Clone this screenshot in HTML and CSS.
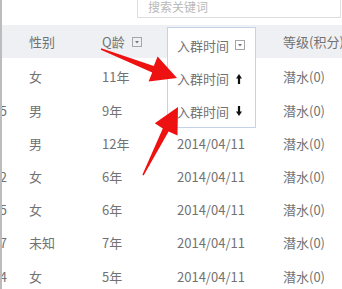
FILE: index.html
```html
<!DOCTYPE html>
<html lang="zh-CN">
<head>
  <meta charset="UTF-8">
  <title>群成员</title>
  <link rel="stylesheet" href="styles.css">
</head>
<body>
  <div class="page">
    <div class="toolbar">
      <div class="search">搜索关键词</div>
    </div>

    <div class="table">
      <div class="row head">
        <div class="cell num"></div>
        <div class="cell">性别</div>
        <div class="cell">Q龄
          <svg class="ico-box" viewBox="0 0 10 10" width="10" height="10"><rect x="0.5" y="0.5" width="9" height="9" fill="none" stroke="#a6a6a6"/><path d="M3 4h4l-2 2.5z" fill="#777"/></svg>
        </div>
        <div class="cell">入群时间</div>
        <div class="cell">等级(积分)</div>
      </div>

      <div class="row"><div class="cell num"></div><div class="cell">女</div><div class="cell">11年</div><div class="cell">2014/04/11</div><div class="cell">潜水(0)</div></div>
      <div class="row"><div class="cell num"><span>2835</span></div><div class="cell">男</div><div class="cell">9年</div><div class="cell">2014/04/11</div><div class="cell">潜水(0)</div></div>
      <div class="row"><div class="cell num"></div><div class="cell">男</div><div class="cell">12年</div><div class="cell">2014/04/11</div><div class="cell">潜水(0)</div></div>
      <div class="row"><div class="cell num"><span>6672</span></div><div class="cell">女</div><div class="cell">6年</div><div class="cell">2014/04/11</div><div class="cell">潜水(0)</div></div>
      <div class="row"><div class="cell num"><span>1095</span></div><div class="cell">女</div><div class="cell">6年</div><div class="cell">2014/04/11</div><div class="cell">潜水(0)</div></div>
      <div class="row"><div class="cell num"><span>3417</span></div><div class="cell">未知</div><div class="cell">7年</div><div class="cell">2014/04/11</div><div class="cell">潜水(0)</div></div>
      <div class="row"><div class="cell num"><span>5204</span></div><div class="cell">女</div><div class="cell">5年</div><div class="cell">2014/04/11</div><div class="cell">潜水(0)</div></div>
    </div>

    <div class="sort-menu">
      <div class="sort-item first">入群时间
        <svg class="ico-box" viewBox="0 0 10 10" width="10" height="10"><rect x="0.5" y="0.5" width="9" height="9" fill="none" stroke="#a6a6a6"/><path d="M3 4h4l-2 2.5z" fill="#777"/></svg>
      </div>
      <div class="sort-item">入群时间
        <svg class="ico-arrow" viewBox="0 0 6 10" width="6" height="10"><path d="M3 0L6 4.4H4.1V10H1.9V4.4H0Z" fill="#111"/></svg>
      </div>
      <div class="sort-item last">入群时间
        <svg class="ico-arrow" viewBox="0 0 6 10" width="6" height="10"><path d="M3 10L6 5.6H4.1V0H1.9V5.6H0Z" fill="#111"/></svg>
      </div>
    </div>

    <!-- annotation arrows drawn over the screenshot -->
    <svg class="marks" viewBox="0 0 342 289" width="342" height="289">
      <polygon points="101.2,48.3 153.8,66 157.6,56.6 177,78 148.6,81.6 152.2,72.4 100.8,49.7" fill="#ee1111"/>
      <polygon points="142.4,174.8 162.8,128.6 154.8,123.2 178,107 177.5,135.6 168.6,131.4 143.6,175.4" fill="#ee1111"/>
    </svg>
  </div>
</body>
</html>
```

FILE: styles.css
```css
* {
  box-sizing: border-box;
}
body {
  margin: 0;
  background-color: white;
}
.page {
  position: relative;
  width: 342px;
  height: 289px;
  overflow: hidden;
  border-left: 2px solid #bcbcbc;
  font-family: "Noto Sans CJK SC", "Noto Sans", sans-serif;
  font-size: 13px;
  color: #727272;
}
.toolbar {
  height: 28px;
}
.search {
  margin-left: 135px;
  margin-top: -3px;
  width: 204px;
  height: 21px;
  border: 1px solid #dedede;
  border-top: none;
  padding-left: 10px;
  line-height: 20px;
  font-size: 12px;
  color: #b9b9b9;
}
.row {
  display: grid;
  grid-template-columns: 27px 73px 75px 106px 1fr;
  align-items: center;
  height: 33.2px;
  white-space: nowrap;
}
.row.head {
  height: 33px;
  margin-bottom: 2.4px;
  background-color: #eef0f4;
}
.cell {
  display: flex;
  align-items: center;
}
.num {
  justify-content: flex-end;
  overflow: hidden;
  padding-right: 22px;
}
.ico-box {
  margin-left: 7px;
}
.sort-menu {
  position: absolute;
  left: 165px;
  top: 27px;
  width: 89px;
  height: 101px;
  border: 1px solid #c6d2ea;
  background-color: white;
}
.sort-item {
  display: flex;
  align-items: center;
  height: 33px;
  padding-left: 9px;
  white-space: nowrap;
}
.sort-item.first {
  height: 34px;
}
.sort-item.last {
  height: 32px;
}
.sort-item .ico-box {
  margin-left: 6px;
}
.ico-arrow {
  margin-left: 7px;
}
.marks {
  position: absolute;
  left: -2px;
  top: 0;
  pointer-events: none;
}
```
